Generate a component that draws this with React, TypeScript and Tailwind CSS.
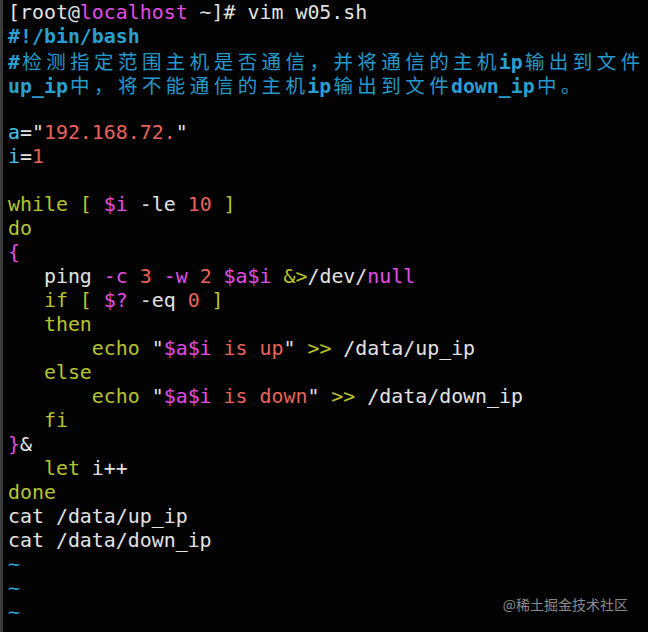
type Tok = [string, string];

const W = 'text-[#e2e2e2]';
const M = 'text-[#e24ce6]';
const CB = 'text-[#2a9fd2] font-bold';
const V = 'text-[#4cc2e8]';
const R = 'text-[#e8625a]';
const Y = 'text-[#b9c42c]';
const T = 'text-[#2aa6d6]';
// CJK run in the comment: each glyph sits in a double-width cell
const K = 'cjk';

const lines: Tok[][] = [
  [['[root@', W], ['localhost', M], [' ~]# vim w05.sh', W]],
  [['#!/bin/bash', CB]],
  [['#', CB], ['检测指定范围主机是否通信，并将通信的主机', K], ['ip', CB], ['输出到文件', K]],
  [['up_ip', CB], ['中，将不能通信的主机', K], ['ip', CB], ['输出到文件', K], ['down_ip', CB], ['中。', K]],
  [],
  [['a', V], ['="', W], ['192.168.72.', R], ['"', W]],
  [['i', V], ['=', W], ['1', R]],
  [],
  [['while [ ', Y], ['$i', M], [' -le ', W], ['10', R], [' ]', Y]],
  [['do', Y]],
  [['{', M]],
  [['   ping ', W], ['-c ', M], ['3 ', R], ['-w ', M], ['2 ', R], ['$a$i ', M], ['&>', Y], ['/dev/', W], ['null', M]],
  [['   if [ ', Y], ['$?', M], [' -eq ', W], ['0', R], [' ]', Y]],
  [['   then', Y]],
  [['       echo ', Y], ['"', W], ['$a$i', M], [' is up', R], ['"', W], [' >>', Y], [' /data/up_ip', W]],
  [['   else', Y]],
  [['       echo ', Y], ['"', W], ['$a$i', M], [' is down', R], ['"', W], [' >>', Y], [' /data/down_ip', W]],
  [['   fi', Y]],
  [['}', M], ['&', W]],
  [['   let', Y], [' i++', W]],
  [['done', Y]],
  [['cat /data/up_ip', W]],
  [['cat /data/down_ip', W]],
  [['~', T]],
  [['~', T]],
  [['~', T]],
];

function Cjk({ text }: { text: string }) {
  return (
    <>
      {Array.from(text).map((ch, i) => (
        <span
          key={i}
          className="inline-block w-[23.95px] text-center text-[#2399cc] font-['Noto_Sans_CJK_SC',sans-serif] text-[19.5px]"
        >
          {ch}
        </span>
      ))}
    </>
  );
}

export default function App() {
  return (
    <div className="relative w-[648px] h-[632px] overflow-hidden bg-[#030303] border-l-[3px] border-[#3a3a3a] pl-[5px] pt-[1px] font-['DejaVu_Sans_Mono','Noto_Sans_CJK_SC',monospace] text-[19.9px]">
      {lines.map((line, i) => (
        <div key={i} className="h-[24px] leading-[24px] whitespace-pre">
          {line.map(([text, cls], j) =>
            cls === K ? (
              <Cjk key={j} text={text} />
            ) : (
              <span key={j} className={cls}>
                {text}
              </span>
            )
          )}
        </div>
      ))}

      {/* watermark */}
      <div className="absolute right-[20px] bottom-[18px] text-[14px] leading-[20px] text-[#8a8a8a] font-['Noto_Sans_CJK_SC',sans-serif]">
        @稀土掘金技术社区
      </div>
    </div>
  );
}
